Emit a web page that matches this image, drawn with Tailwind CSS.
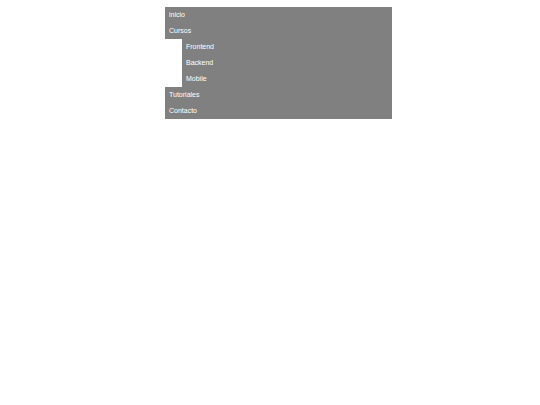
<!DOCTYPE html>
<html lang="es">
<head>
  <meta charset="utf-8">
  <title>Menú</title>
  <meta name="viewport" content="width=device-width, initial-scale=1">
  <script src="https://cdn.jsdelivr.net/npm/@tailwindcss/browser@4"></script>
</head>
<body class="bg-white font-['Liberation_Sans',Arial,sans-serif]">
  <nav class="ml-[165px] mr-[148px] mt-[7px] text-[7px] leading-4 text-white">
    <ul>
      <li><a href="#" class="block bg-[#808080] px-1">inicio</a></li>
      <li>
        <a href="#" class="block bg-[#808080] px-1">Cursos</a>
        <ul class="pl-[17px]">
          <li><a href="#" class="block bg-[#808080] px-1">Frontend</a></li>
          <li><a href="#" class="block bg-[#808080] px-1">Backend</a></li>
          <li><a href="#" class="block bg-[#808080] px-1">Mobile</a></li>
        </ul>
      </li>
      <li><a href="#" class="block bg-[#808080] px-1">Tutoriales</a></li>
      <li><a href="#" class="block bg-[#808080] px-1">Contacto</a></li>
    </ul>
  </nav>
</body>
</html>
